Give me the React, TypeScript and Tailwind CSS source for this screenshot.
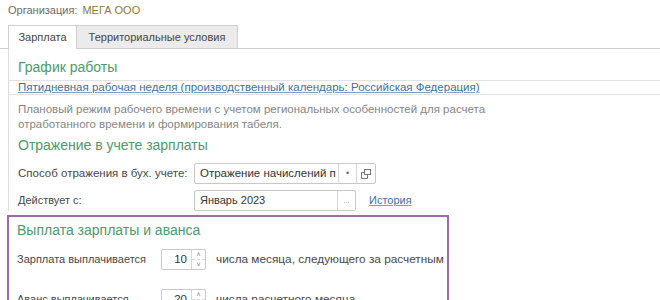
import React from 'react';

function Heading({ children }: { children: React.ReactNode }) {
  return <div className="text-[14px] leading-[18px] text-[#4a9a6c]">{children}</div>;
}

function Spinner({ value }: { value: string }) {
  return (
    <div className="flex h-[21px] w-[45px] shrink-0 items-stretch rounded-[2px] border border-[#c8c8c8] bg-white">
      <div className="flex flex-1 items-center justify-end pr-[4px] text-[#333]">{value}</div>
      <div className="flex w-[14px] flex-col border-l border-[#d6d6d6]">
        <div className="flex flex-1 items-center justify-center text-[7px] leading-none text-[#777]">˄</div>
        <div className="flex flex-1 items-center justify-center border-t border-dashed border-[#dcdcdc] text-[7px] leading-none text-[#777]">˅</div>
      </div>
    </div>
  );
}

export default function App() {
  return (
    <div className="h-[300px] w-[660px] overflow-hidden bg-white font-['Liberation_Sans',Arial,sans-serif] text-[11.5px] text-[#474747]">
      {/* Organization */}
      <div className="flex h-[19px] items-center gap-[5px] pl-[8px] pt-[1px] text-[11px]">
        <span className="text-[#6a6a6a]">Организация:</span>
        <span className="text-[#8c7b2e]">МЕГА ООО</span>
      </div>

      {/* Tabs */}
      <div className="mt-[6px] flex h-[24px] items-end border-b border-[#cfcfcf] pl-[8px] text-[11px]">
        <div className="-mb-px flex h-[24px] w-[69px] items-center justify-center border-x border-t border-[#cfcfcf] bg-white text-[#444]">
          Зарплата
        </div>
        <div className="flex h-[23px] w-[161px] items-center justify-center border-r border-t border-[#cfcfcf] bg-[#ebebeb] text-[#444]">
          Территориальные условия
        </div>
      </div>

      {/* Panel */}
      <div className="ml-[8px] border-l border-[#dcdcdc] pl-[9px] pt-[9px]">
        <Heading>График работы</Heading>
        <div className="-ml-[9px] mt-[4px] flex h-[15px] items-center border-y border-[#e2e2e2] pl-[9px] pt-[1px]">
          <a className="text-[#3d6fa6] underline decoration-[#7a9cc4]">
            Пятидневная рабочая неделя (производственный календарь: Российская Федерация)
          </a>
        </div>
        <div className="mt-[7px] leading-[15px] text-[#858585]">
          Плановый режим рабочего времени с учетом региональных особенностей для расчета
          <br />
          отработанного времени и формирования табеля.
        </div>

        <div className="mt-[4px]">
          <Heading>Отражение в учете зарплаты</Heading>
        </div>

        <div className="mt-[9px] flex items-center">
          <div className="w-[176px]">Способ отражения в бух. учете:</div>
          <div className="flex h-[21px] items-stretch rounded-[2px] border border-[#c8c8c8]">
            <div className="flex w-[143px] items-center overflow-hidden whitespace-nowrap pl-[5px] text-[#333]">
              Отражение начислений п
            </div>
            <div className="flex w-[18px] items-center justify-center border-l border-[#d6d6d6] text-[9px] text-[#666]">•</div>
            <div className="flex w-[19px] items-center justify-center border-l border-[#d6d6d6]">
              <svg width="10" height="10" viewBox="0 0 10 10" fill="none" stroke="#777" strokeWidth="1">
                <rect x="3.5" y="0.5" width="6" height="5" />
                <path d="M3.5 3.5H0.5V9.5H6.5V5.5" />
              </svg>
            </div>
          </div>
        </div>

        <div className="mt-[6px] flex items-center">
          <div className="w-[176px] text-[11px]">Действует с:</div>
          <div className="flex h-[21px] items-stretch rounded-[2px] border border-[#c8c8c8]">
            <div className="flex w-[142px] items-center pl-[5px] text-[11px] text-[#333]">Январь 2023</div>
            <div className="flex w-[18px] items-end justify-center border-l border-[#d6d6d6] pb-[5px] text-[8px] leading-none text-[#999]">...</div>
          </div>
          <a className="ml-[13px] text-[11px] text-[#3d6fa6] underline decoration-[#7a9cc4]">История</a>
        </div>
      </div>

      {/* Highlighted block */}
      <div className="ml-[7px] mt-[4px] h-[120px] w-[442px] border-2 border-[#9a6ba6] pl-[8px] pt-[4px]">
        <Heading>Выплата зарплаты и аванса</Heading>
        <div className="mt-[10px] flex items-center whitespace-nowrap">
          <div className="w-[144px] shrink-0 text-[11px]">Зарплата выплачивается</div>
          <Spinner value="10" />
          <div className="ml-[10px] text-[11.8px]">числа месяца, следующего за расчетным</div>
        </div>
        <div className="mt-[19px] flex items-center whitespace-nowrap">
          <div className="w-[144px] shrink-0 text-[11px]">Аванс выплачивается</div>
          <Spinner value="20" />
          <div className="ml-[10px] text-[11.8px]">числа расчетного месяца</div>
        </div>
      </div>
    </div>
  );
}
